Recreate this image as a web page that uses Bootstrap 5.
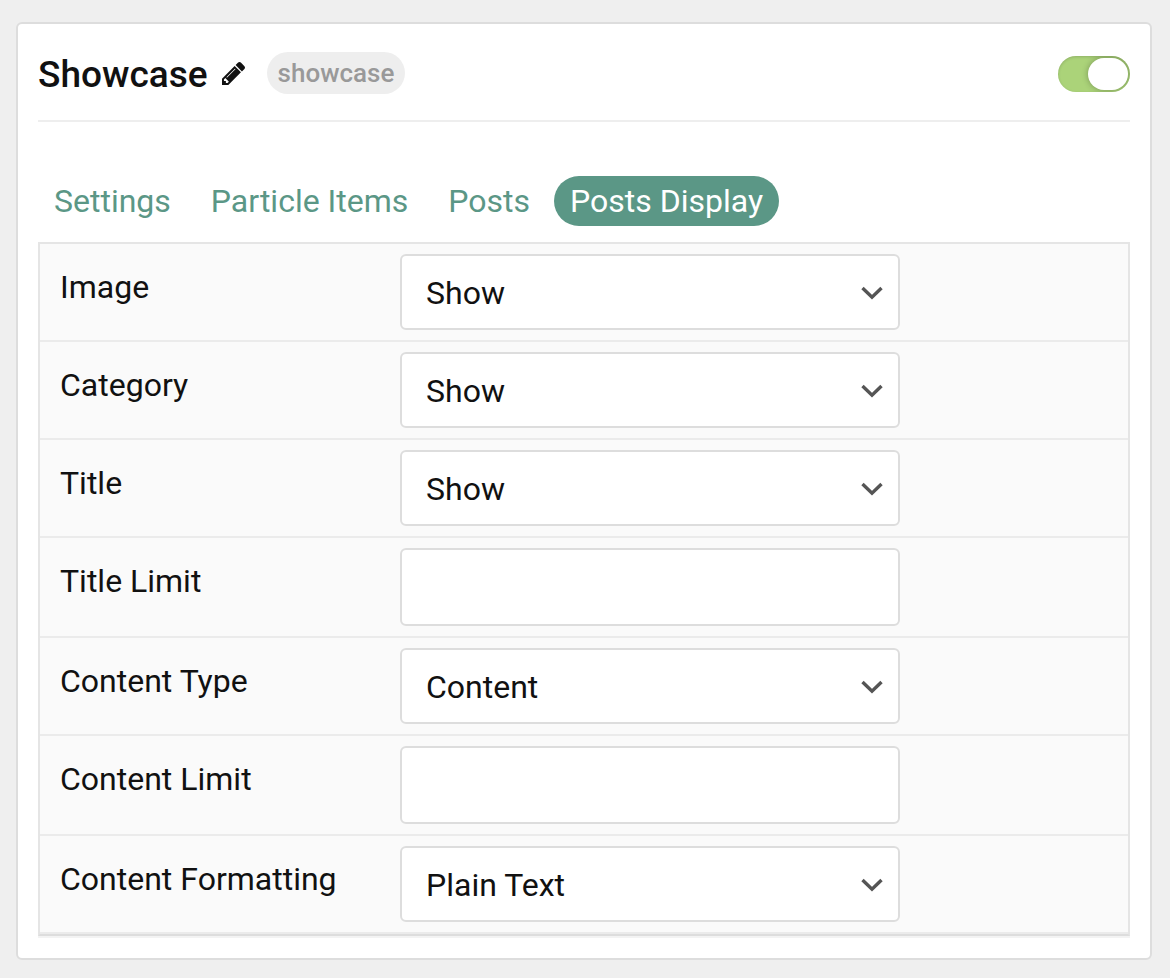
<!DOCTYPE html>
<html lang="en">
<head>
<meta charset="utf-8">
<meta name="viewport" content="width=device-width, initial-scale=1">
<title>Showcase</title>
<link href="https://cdn.jsdelivr.net/npm/bootstrap@5.3.0/dist/css/bootstrap.min.css" rel="stylesheet">
<style>
  body { background: #efefef; color: #111; font-family: Roboto, sans-serif; font-size: 32px; line-height: 48px; padding: 22px 18px 18px 16px; }
  .panel { border: 2px solid #ddd; border-radius: 6px; padding: 0 20px 22px; }
  .panel-head { height: 98px; border-bottom: 2px solid #eee; margin-bottom: 54px; padding-top: 2px; }
  .panel-title { font-size: 37px; line-height: 48px; font-weight: 500; margin: 4px 14px 0 0; }
  .edit-btn { line-height: 0; margin-right: 22px; color: #111; }
  .type-tag { background: #eee; color: #999; font-size: 26px; line-height: 42px; font-weight: 500; padding: 0 11px; }
  .toggle { appearance: none; display: flex; justify-content: flex-end; width: 72px; height: 36px; margin: 2px 0 0; padding: 2px; border-radius: 18px; background: #ddd; box-shadow: inset 0 1px 3px rgba(0,0,0,.16); overflow: hidden; cursor: pointer; }
  .toggle::before { content: ""; width: 40px; height: 32px; border-radius: 16px; background: #fff; box-shadow: 0 0 6px rgba(0,0,0,.3); }
  .toggle:checked { background: #abd379; }
  .toggle:not(:checked) { justify-content: flex-start; }
  .nav-pills { --bs-nav-pills-border-radius: 25px; --bs-nav-pills-link-active-bg: #5b9786; --bs-nav-link-color: #5b9786; --bs-nav-link-hover-color: #447666; gap: 8px; margin-bottom: 16px; }
  .nav-pills .nav-link { font-size: 32px; line-height: 50px; padding: 0 16px; }
  .fields { background: #fafafa; border: 2px solid #e5e5e5; border-bottom-color: #ddd; box-shadow: 0 2px 0 #f3f3f3; }
  .field-row { border-bottom: 2px solid #ebebeb; padding: 10px 20px; }
  .field-row label { flex: 0 0 340px; padding-top: 9px; }
  .field-row .form-select, .field-row .form-control { flex: 0 1 500px; min-width: 0; border: 2px solid #ddd; border-radius: 6px; font-size: 32px; line-height: 48px; color: #111; background-color: #fff; padding: 13px 24px 11px; }
  .field-row .form-select { height: 76px; padding-right: 56px; background-image: url("data:image/svg+xml,%3csvg xmlns='http://www.w3.org/2000/svg' viewBox='0 0 22 16'%3e%3cpath d='M1.500 4l9.500 9.200L20.500 4' fill='none' stroke='%23555' stroke-width='3.400'/%3e%3c/svg%3e"); background-size: 22px 16px; background-position: right 15px center; }
  .field-row .form-control { height: 78px; }
</style>
</head>
<body>
<main class="panel bg-white">
  <header class="panel-head d-flex align-items-center">
    <h1 class="panel-title">Showcase</h1>
    <button type="button" class="edit-btn btn p-0 border-0" aria-label="Edit title">
      <svg width="23" height="23" viewBox="128 149 1515 1515" fill="currentColor" aria-hidden="true"><path d="M491 1536l91-91-235-235-91 91v107h128v128h107zM1014 608q0-22-22-22-10 0-17 7l-542 542q-7 7-7 17 0 22 22 22 10 0 17-7l542-542q7-7 7-17zM960 416l416 416-832 832h-416v-416zM1643 512q0 53-37 90l-166 166-416-416 166-165q36-38 90-38 53 0 91 38l235 234q37 39 37 91z"/></svg>
    </button>
    <span class="type-tag rounded-pill">showcase</span>
    <input class="toggle ms-auto" type="checkbox" role="switch" aria-label="Enabled" checked>
  </header>

  <nav class="nav nav-pills">
    <a class="nav-link" href="#settings">Settings</a>
    <a class="nav-link" href="#items">Particle Items</a>
    <a class="nav-link" href="#posts">Posts</a>
    <a class="nav-link active" href="#display" aria-current="page">Posts Display</a>
  </nav>

  <form class="fields" id="display">
    <div class="field-row d-flex align-items-start">
      <label for="image">Image</label>
      <select class="form-select" id="image"><option>Show</option><option>Hide</option></select>
    </div>
    <div class="field-row d-flex align-items-start">
      <label for="category">Category</label>
      <select class="form-select" id="category"><option>Show</option><option>Hide</option></select>
    </div>
    <div class="field-row d-flex align-items-start">
      <label for="title">Title</label>
      <select class="form-select" id="title"><option>Show</option><option>Hide</option></select>
    </div>
    <div class="field-row d-flex align-items-start">
      <label for="title-limit">Title Limit</label>
      <input class="form-control" type="text" id="title-limit">
    </div>
    <div class="field-row d-flex align-items-start">
      <label for="content-type">Content Type</label>
      <select class="form-select" id="content-type"><option>Content</option></select>
    </div>
    <div class="field-row d-flex align-items-start">
      <label for="content-limit">Content Limit</label>
      <input class="form-control" type="text" id="content-limit">
    </div>
    <div class="field-row d-flex align-items-start">
      <label for="formatting">Content Formatting</label>
      <select class="form-select" id="formatting"><option>Plain Text</option></select>
    </div>
  </form>
</main>
<script src="https://cdn.jsdelivr.net/npm/bootstrap@5.3.0/dist/js/bootstrap.bundle.min.js"></script>
</body>
</html>
